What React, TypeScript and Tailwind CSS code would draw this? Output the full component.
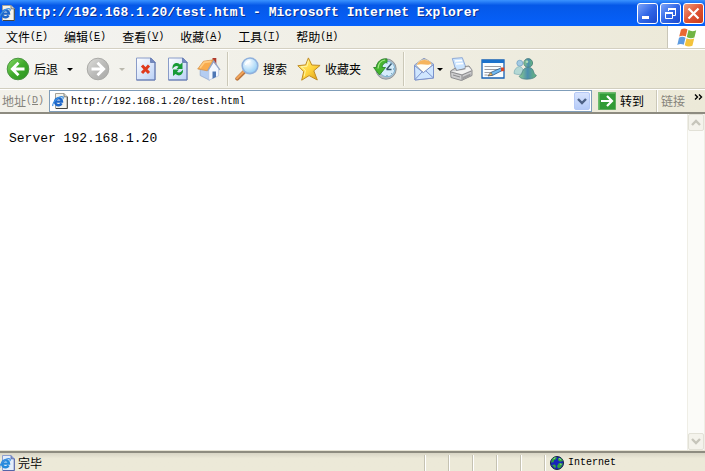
import type { ReactNode } from "react";

const mono = "font-['Liberation_Mono','Noto_Sans_CJK_SC',monospace]";
const sans = "font-['Noto_Sans_CJK_SC',sans-serif]";

function PageIcon({ className = "", blue = false }: { className?: string; blue?: boolean }) {
  return (
    <svg viewBox="0 0 16 16" className={"size-4 shrink-0 " + className} aria-hidden="true">
      <path d="M3.5.5H12l3.3 3.3v11.7H3.5z" fill={blue ? "#e3edfb" : "#f4f3ec"} stroke={blue ? "#8d9fd0" : "#a5a399"} />
      <path d="M15.3 3.8v11.7H4" fill="none" stroke={blue ? "#5565a8" : "#45453f"} />
      <path d="M12 .5v3.3h3.3" fill={blue ? "#8396cc" : "#d5d5cf"} stroke={blue ? "#5565a8" : "#6c6c66"} strokeWidth=".8" />
      <path d="M9.6 10.4A3.5 3.5 0 1 1 10 8.6H4" fill="none" stroke={blue ? "#2389dc" : "#1c66c9"} strokeWidth="2.4" />
      <path d="M1 13C-.6 10.2 6.6 2.8 10.6 3.8c1.2.4.5 1.6.2 2.1" fill="none" stroke="#3d8fe0" strokeWidth="1.2" />
    </svg>
  );
}

function ArrowDisc({ back = false }: { back?: boolean }) {
  const id = back ? "disc-back" : "disc-forward";
  return (
    <svg viewBox="0 0 24 24" className="size-6 shrink-0" aria-hidden="true">
      <defs>
        <linearGradient id={id} x1="0" y1="0" x2="1" y2="1">
          <stop offset="0" stopColor={back ? "#8bdc68" : "#dededb"} />
          <stop offset=".5" stopColor={back ? "#3faa2c" : "#bcbcba"} />
          <stop offset="1" stopColor={back ? "#2a9220" : "#a9a9a7"} />
        </linearGradient>
      </defs>
      <circle cx="12" cy="12" r="10.8" fill={"url(#" + id + ")"} stroke={back ? "#4a9442" : "#aaaaa7"} />
      <path
        d={back ? "M12.5 5.8 6.3 12l6.2 6.2M7 12h11.5" : "M11.5 5.8l6.2 6.2-6.2 6.2M17 12H5.5"}
        fill="none"
        stroke="#fff"
        strokeWidth="2.8"
      />
    </svg>
  );
}

function Caret({ faded = false }: { faded?: boolean }) {
  return (
    <svg viewBox="0 0 6 3" className="h-[3px] w-[6px] shrink-0" aria-hidden="true">
      <path d="M0 0h6L3 3z" fill={faded ? "#bbb9ae" : "#000"} />
    </svg>
  );
}

function SheetIcon({ children }: { children: ReactNode }) {
  return (
    <svg viewBox="0 0 20 24" className="h-6 w-5 shrink-0" aria-hidden="true">
      <defs>
        <linearGradient id="sheet" x1="0" y1="0" x2="1" y2="1">
          <stop offset="0" stopColor="#fff" />
          <stop offset="1" stopColor="#b9d0f6" />
        </linearGradient>
      </defs>
      <path d="M.5 1H15l4 4v18H.5z" fill="url(#sheet)" stroke="#8a9cc8" />
      <path d="M.5 23H19V5" fill="none" stroke="#6379b0" />
      <path d="M14.5 1v4.5H19z" fill="#7087c0" stroke="#5d73aa" strokeWidth=".7" />
      {children}
    </svg>
  );
}

function HomeIcon() {
  return (
    <svg viewBox="0 0 24 24" className="size-6 shrink-0" aria-hidden="true">
      <path d="M15.5 1h3.8v8h-3.8z" fill="#b0392c" />
      <path d="M3.2 12v6.5l9.3 4.7V12z" fill="#b4cdf2" stroke="#93a9d0" strokeWidth=".8" />
      <path d="M11.8 12.5v10.7l9.8-4.4v-7.3L16.5 5z" fill="#f3f8ff" stroke="#a9bbdc" strokeWidth=".6" />
      <path d="M.7 12 6.5 4.2 16.5 2.800 10.300 13.800z" fill="#f9ab4c" stroke="#d08e4b" strokeWidth=".7" />
      <path d="M3 11 7.300 5.300l7-1" fill="none" stroke="#ffcb80" strokeWidth="1.800" />
      <path d="M11 13.500 16.800 4l6.200 9" fill="none" stroke="#93a5c8" strokeWidth="1.300" />
      <path d="M15.500 14.500h3.500v5.600l-3.500 1.600z" fill="#4e77b5" />
    </svg>
  );
}

function SearchIcon() {
  return (
    <svg viewBox="0 0 24 24" className="size-6 shrink-0" aria-hidden="true">
      <defs>
        <radialGradient id="lens" cx=".38" cy=".3" r=".75">
          <stop offset="0" stopColor="#fff" />
          <stop offset="1" stopColor="#8ccbf6" />
        </radialGradient>
      </defs>
      <path d="M9.5 14.5 2.3 21.7" stroke="#b8743e" strokeWidth="4" strokeLinecap="round" />
      <path d="M9 14.3 2 21.2" stroke="#f1a45a" strokeWidth="2" strokeLinecap="round" />
      <circle cx="15" cy="8.8" r="7.8" fill="url(#lens)" stroke="#8fb0dc" strokeWidth="1.6" />
      <path d="M10.5 8c.8-3 3-4 5-4" fill="none" stroke="#fff" strokeWidth="1.3" />
    </svg>
  );
}

function StarIcon() {
  return (
    <svg viewBox="0 0 24 24" className="size-6 shrink-0" aria-hidden="true">
      <defs>
        <linearGradient id="star" x1="0" y1="0" x2="1" y2="1">
          <stop offset="0" stopColor="#fff48b" />
          <stop offset=".55" stopColor="#ffd43c" />
          <stop offset="1" stopColor="#d99a18" />
        </linearGradient>
      </defs>
      <path d="M11.4.9 14.8 8l8.3.4-6.3 5.4 3.5 9.2-8.2-4.4-7.4 4.6 2-8.7L.8 8.7l7.8-.8z" fill="url(#star)" stroke="#c08c24" strokeLinejoin="round" />
      <path d="M11.4 3.5 10 9.2l-5.8.6 4.2 3.6-1.2 6" fill="none" stroke="#fff8ae" strokeWidth=".9" />
    </svg>
  );
}

function HistoryIcon() {
  return (
    <svg viewBox="0 0 24 24" className="size-6 shrink-0" aria-hidden="true">
      <circle cx="13" cy="12" r="10.2" fill="#b4bcc3" stroke="#8d959c" />
      <circle cx="14" cy="12" r="7.8" fill="#d4ecfb" stroke="#7fb4d4" />
      <path d="m13.5 12.5 5-6M13.5 12.5h5" stroke="#37576c" strokeWidth="1.4" />
      <path d="M14 5.5v1.2M20 12h1M14 18v1.2M18.4 16.4l.7.7" stroke="#547f98" />
      <path d="M14 2C8.2 1.2 4 4.5 3.4 10.5H.6L6.5 18l6-7.5H9c.3-3 2-4.8 5-5.2z" fill="#45b52f" stroke="#2d8a28" strokeWidth=".9" />
      <path d="M12 3C8 3.5 5.4 6.4 5 11.5" fill="none" stroke="#a4e986" strokeWidth="1.2" />
    </svg>
  );
}

function MailIcon() {
  return (
    <svg viewBox="0 0 22 24" className="h-6 w-[22px] shrink-0" aria-hidden="true">
      <path d="M1.5 8 11 1.2 20.5 7v14L2 23z" fill="#a7c6ed" stroke="#8f9fc6" />
      <path d="M3.5 8.5C5 4 8 2.7 12 2.5c4 .5 6 2.5 6.5 6L11 16z" fill="#fffdf5" stroke="#c9b48e" strokeWidth=".6" />
      <path d="M4 8c2-6 11-6.5 14.5-1.5C15 9.5 9 6 4 8z" fill="#f6b45c" />
      <path d="m1.5 8.5 8.8 7.2 10.2-8.2V21L2 23z" fill="#cfe6ff" stroke="#7b92cc" />
      <path d="m2 22.5 7.5-8M20.3 20.8l-7.5-7" stroke="#7b92cc" />
    </svg>
  );
}

function PrinterIcon() {
  return (
    <svg viewBox="0 0 24 24" className="size-6 shrink-0" aria-hidden="true">
      <path d="m3.3 1.5 10-.8 4 10.8L7 14z" fill="#cce5ff" stroke="#8fa9d4" />
      <path d="m6 4 7-.5M7 7l7-.5" stroke="#fff" strokeWidth="1.5" />
      <path d="m1.5 14 5-3 1 2.5 9-2-.5-2 4-.5 3 4v5.500l-10.500 5L2 20.500z" fill="#cdcdcf" stroke="#8c8c8e" />
      <path d="m2 14.500 11 2.800 9.500-4.200-3-3.200-3 .5v2.300L7.500 14z" fill="#f3f3f2" />
      <path d="m2 15 11 3v5.2M13 18l9.5-4M4 18l7 2" fill="none" stroke="#8c8c8e" />
      <path d="m13.5 20 8-3.500V19l-8 3.500z" fill="#9b9b9d" />
    </svg>
  );
}

function EditIcon() {
  return (
    <svg viewBox="0 0 24 20" className="h-5 w-6 shrink-0" aria-hidden="true">
      <path d="M1 1h22v18H1z" fill="#fafdff" stroke="#1762b5" strokeWidth="1.3" />
      <path d="M1 1h22v3H1z" fill="#1c72cc" />
      <path d="M3.5 7.5H20M3.5 10.5H18M3.5 13.5h7M3.5 16h3" stroke="#9d9da3" />
      <path d="m7 16.8 3-3.4 10-4.5 2 2.2-10.5 5.3z" fill="#71b9ef" stroke="#28588b" strokeWidth=".8" />
      <path d="m7 16.8 3-3.3 1.5 2.6z" fill="#f6bd61" stroke="#664d32" strokeWidth=".5" />
      <path d="M20 8.5h3.2v3.7H20z" fill="#d94625" />
    </svg>
  );
}

function PeopleIcon() {
  return (
    <svg viewBox="0 0 24 22" className="h-[22px] w-6 shrink-0" aria-hidden="true">
      <defs>
        <linearGradient id="people" x1="0" y1="0" x2="1" y2="0">
          <stop offset="0" stopColor="#8fcf8a" />
          <stop offset=".5" stopColor="#4b8dae" />
          <stop offset="1" stopColor="#68b979" />
        </linearGradient>
      </defs>
      <circle cx="6.8" cy="5.2" r="3" fill="#a4cbe4" stroke="#5f93b8" strokeWidth=".6" />
      <path d="M1 15.5c0-4 2.3-6.5 5.5-7 2.5.4 4 3 4.3 6.2-2 2-6.5 2.5-9.8.8z" fill="#b4d8d4" stroke="#6fa5b0" strokeWidth=".6" />
      <circle cx="15.2" cy="5" r="4.4" fill="url(#people)" stroke="#376f72" strokeWidth=".7" />
      <path d="M6 18.3c3-1.2 2.7-4 4.3-6.5 2.2-3.3 8-3.3 9.7.3 1.2 2.7 1 4.5 3.4 5.2-1.2 4.5-15 5.5-17.4 1z" fill="url(#people)" stroke="#477c84" strokeWidth=".7" />
      <circle cx="14" cy="3.7" r="1.3" fill="#acd9b6" />
    </svg>
  );
}

function WindowsFlag() {
  return (
    <svg viewBox="0 0 20 19" className="h-[19px] w-5" aria-hidden="true">
      <path d="M4 1.5C6.5.2 8.5.4 10.5 1.4L8.8 8.5C6.8 7.5 4.5 7.4 2.2 8.6z" fill="#e96932" />
      <path d="M11.5 2c2.5 1.5 5 1.5 7.7.2l-1.8 7.2c-2.5 1.2-5 1.1-7.6-.4z" fill="#70b443" />
      <path d="M2 9.7c2.3-1.2 4.5-1 6.5 0l-1.7 7C4.7 15.6 2.5 15.7.3 16.9z" fill="#5d9be0" />
      <path d="M9.5 10.2c2.5 1.4 5 1.5 7.7.3l-1.8 7.2c-2.7 1.2-5.2 1-7.7-.5z" fill="#f4c33b" />
    </svg>
  );
}

function GlobeIcon() {
  return (
    <svg viewBox="0 0 14 14" className="size-3.5 shrink-0" aria-hidden="true">
      <circle cx="7" cy="7" r="6.5" fill="#1724bb" stroke="#152342" />
      <path d="M2 3 5 1l2 .3-1 2-2 1-.5 2L1 6.5zM8 2l3.5.5L13 5l-3 .7-2-1.5zM9 7l4 .5-2.2 4L8 12.5 7 10zM2 9l3-.5 1 2-1 2z" fill="#33a441" />
      <path d="m3.5 2.8 1.8-1M9 2.5l2 1M10 8l1.5.3" stroke="#9be19c" />
    </svg>
  );
}

function Chevron({ up = false }: { up?: boolean }) {
  return (
    <svg viewBox="0 0 10 7" className="h-[7px] w-2.5" aria-hidden="true">
      <path d={up ? "m1 6 4-4 4 4" : "m1 1 4 4 4-4"} fill="none" stroke="currentColor" strokeWidth="2.4" />
    </svg>
  );
}

function CaptionButton({ label, close = false, children }: { label: string; close?: boolean; children: ReactNode }) {
  return (
    <button
      aria-label={label}
      className={
        "flex size-[21px] items-center justify-center rounded-[3px] border border-white bg-linear-to-br " +
        (close ? "from-[#ee9b7c] via-[#df5334] to-[#c93b19]" : "from-[#7da3f8] via-[#3167e7] to-[#1c49cd]")
      }
    >
      <svg viewBox="0 0 19 19" className="size-[19px]" fill="none" stroke="#fff" aria-hidden="true">
        {children}
      </svg>
    </button>
  );
}

function Divider() {
  return <span className="h-[34px] w-0.5 shrink-0 border-l border-r border-l-[#cbc8b8] border-r-[#fbfaf3]" />;
}

const menus = [
  ["文件", "F"],
  ["编辑", "E"],
  ["查看", "V"],
  ["收藏", "A"],
  ["工具", "T"],
  ["帮助", "H"],
];

function AccessKey({ letter }: { letter: string }) {
  return (
    <span className={mono + " text-[10px]"}>
      (<u>{letter}</u>)
    </span>
  );
}

export default function App() {
  return (
    <div className={sans + " flex min-h-screen flex-col bg-[#ece9d8] text-xs leading-4 text-black"}>
      <header className="flex h-[26px] items-center bg-linear-to-b from-[#3b93ff] via-[#0558e8] via-20% to-[#0661fb] pr-px">
        <PageIcon className="-ml-px" />
        <h1 className={mono + " ml-1 flex-1 truncate text-[13px] font-bold text-white [text-shadow:1px_1px_#0b3293]"}>
          http://192.168.1.20/test.html - Microsoft Internet Explorer
        </h1>
        <div className="flex gap-0.5">
          <CaptionButton label="最小化">
            <path d="M4 13.5h7" strokeWidth="3" />
          </CaptionButton>
          <CaptionButton label="还原">
            <path d="M7.5 7V4.5h7v7H12" />
            <path d="M7 5h8" strokeWidth="2" />
            <path d="M4.5 8.5h7v6h-7z" />
            <path d="M4 9h8" strokeWidth="2" />
          </CaptionButton>
          <CaptionButton label="关闭" close>
            <path d="m4.5 4.5 10 10m0-10-10 10" strokeWidth="2.2" />
          </CaptionButton>
        </div>
      </header>

      <nav className="flex h-[23px] border-b border-[#d4d0c2] bg-linear-to-r from-[#f4f4f2] to-[#ece9d8]">
        <div className="flex flex-1 items-center gap-4 pl-1.5">
          {menus.map(([name, key]) => (
            <button key={key} className="flex items-center whitespace-nowrap">
              {name}
              <AccessKey letter={key} />
            </button>
          ))}
        </div>
        <div className="flex w-[38px] items-center justify-center border-l border-[#c9c6b8] bg-white">
          <WindowsFlag />
        </div>
      </nav>

      <div role="toolbar" className="flex h-10 items-center border-t border-b border-t-white border-b-[#d1cebf] bg-linear-to-r from-[#f4f4f1] to-[#ece9d8] pl-1.5 whitespace-nowrap">
        <button className="flex items-center gap-1">
          <ArrowDisc back />
          后退
        </button>
        <button aria-label="后退列表" className="ml-1.5 flex h-6 w-3 items-center justify-center"><Caret /></button>
        <button aria-label="前进" className="ml-2.5"><ArrowDisc /></button>
        <button aria-label="前进列表" className="ml-1.5 flex h-6 w-3 items-center justify-center"><Caret faded /></button>
        <button aria-label="停止" className="ml-2">
          <SheetIcon>
            <path d="m6 8.5 7 7.5m0-7.5L6 16" stroke="#df3a1d" strokeWidth="3" />
          </SheetIcon>
        </button>
        <button aria-label="刷新" className="ml-3">
          <SheetIcon>
            <path d="M4.5 12C4 6.5 8.500 4.500 12 7.500l2.500-2V12H8.500l2-2.300C8.500 8.300 6.500 9 4.500 12z" fill="#179a36" />
            <path d="M15 12.500c.5 5.500-4 7.500-7.500 4.500L5 19v-6.500h6l-2 2.300c2 1.400 4 .7 6-2.300z" fill="#179a36" />
          </SheetIcon>
        </button>
        <button aria-label="主页" className="mr-1.5 ml-[9px]"><HomeIcon /></button>
        <Divider />
        <button className="ml-1.5 flex items-center gap-1"><SearchIcon />搜索</button>
        <button className="ml-2.5 flex items-center gap-1"><StarIcon />收藏夹</button>
        <button aria-label="历史" className="mr-1.5 ml-3"><HistoryIcon /></button>
        <Divider />
        <button aria-label="邮件" className="ml-2 flex items-center gap-0.5"><MailIcon /><Caret /></button>
        <button aria-label="打印" className="ml-1.5"><PrinterIcon /></button>
        <button aria-label="编辑" className="ml-2"><EditIcon /></button>
        <button aria-label="信使" className="ml-2"><PeopleIcon /></button>
      </div>

      <form className="flex h-[25px] items-center border-t border-b-2 border-t-white border-b-[#8d8b80] bg-linear-to-r from-[#f2f1ea] to-[#ece9d8] whitespace-nowrap" onSubmit={(e) => e.preventDefault()}>
        <label htmlFor="address" className="flex w-[49px] shrink-0 items-center pl-0.5 text-[#85837b]">
          地址
          <AccessKey letter="D" />
        </label>
        <div className="flex h-[22px] min-w-0 flex-1 items-center border border-[#7f9db9] bg-white pr-px pl-0.5">
          <PageIcon />
          <input id="address" defaultValue="http://192.168.1.20/test.html" className={mono + " ml-[3px] min-w-0 flex-1 bg-transparent pt-0.5 text-[10px] leading-4 outline-none"} />
          <button type="button" aria-label="地址列表" className="flex h-[18px] w-4 items-center justify-center rounded-xs border border-[#b5c9f6] bg-linear-to-b from-[#d8e4fe] to-[#b5cbf8] text-[#4d6185]">
            <Chevron />
          </button>
        </div>
        <button className="mr-3 ml-1.5 flex items-center gap-1">
          <svg viewBox="0 0 18 18" className="size-[18px] shrink-0" aria-hidden="true">
            <path d="M.5.5h17v17H.5z" fill="#329b36" stroke="#62ad60" />
            <path d="M1 17V1h16" fill="none" stroke="#79c779" />
            <path d="M3 9h10M9 4l5 5-5 5" fill="none" stroke="#fff" strokeWidth="2.2" />
          </svg>
          转到
        </button>
        <span className="h-full w-0.5 border-r border-l border-l-[#cbc8b8] border-r-white" />
        <span className="ml-[3px] text-[#85837b]">链接</span>
        <button type="button" aria-label="更多链接" className="mr-0.5 ml-[9px] self-start pt-1">
          <svg viewBox="0 0 9 6" className="h-1.5 w-[9px]" aria-hidden="true">
            <path d="M1 .5 3.5 3 1 5.5M5 .5 7.5 3 5 5.5" fill="none" stroke="#000" strokeWidth="1.4" />
          </svg>
        </button>
      </form>

      <div className="flex flex-1 border-b border-[#e6e3d4] bg-white">
        <main className={mono + " flex-1 px-[9px] pt-4 text-[13px] leading-[18px]"}>Server 192.168.1.20</main>
        <div className="flex w-[18px] flex-col justify-between border-r border-l border-[#efeee6] bg-[#fbfbf8] text-[#c6c5bb]">
          <button aria-label="向上滚动" className="flex h-[17px] items-center justify-center rounded-xs border border-[#e2e1d7] bg-[#f4f3ec]"><Chevron up /></button>
          <button aria-label="向下滚动" className="flex h-[17px] items-center justify-center rounded-xs border border-[#e2e1d7] bg-[#f4f3ec]"><Chevron /></button>
        </div>
      </div>

      <footer className="flex h-5 border-t-2 border-[#8e8c80] bg-linear-to-b from-[#d8d5c5] to-[#ece9d8] to-30%">
        <div className="flex flex-1 items-center gap-[3px] pt-0.5">
          <PageIcon className="-ml-px" blue />
          <span>完毕</span>
        </div>
        <div className="flex pt-0.5">
          {[1, 2, 3, 4, 5].map((n) => (
            <span key={n} className="w-6 border-l border-[#c5c2b2] shadow-[inset_1px_0_#fff]" />
          ))}
          <div className={mono + " flex w-[161px] items-center gap-1 border-l border-[#c5c2b2] pl-[5px] text-[10px] shadow-[inset_1px_0_#fff]"}>
            <GlobeIcon />
            Internet
          </div>
        </div>
      </footer>
    </div>
  );
}
